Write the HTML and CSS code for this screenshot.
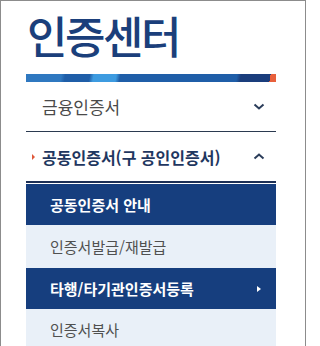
FILE: index.html
```html
<!DOCTYPE html>
<html lang="ko">
<head>
<meta charset="utf-8">
<link rel="stylesheet" href="styles.css">
</head>
<body>
<div class="page">
  <h1 class="title">인증센터</h1>
  <div class="bar"></div>
  <ul class="menu">
    <li class="item">
      <span class="label">금융인증서</span>
      <svg class="chev" width="12" height="7" viewBox="0 0 12 7"><path d="M1.5 1.5 L6 5.5 L10.5 1.5" fill="none" stroke="#2b3d5a" stroke-width="2"/></svg>
    </li>
    <li class="item open">
      <span class="marker"></span>
      <span class="label">공동인증서(구 공인인증서)</span>
      <svg class="chev" width="12" height="7" viewBox="0 0 12 7"><path d="M1.5 5.5 L6 1.5 L10.5 5.5" fill="none" stroke="#2b3d5a" stroke-width="2"/></svg>
    </li>
  </ul>
  <ul class="sub">
    <li class="sub-item on">공동인증서 안내</li>
    <li class="sub-item">인증서발급/재발급</li>
    <li class="sub-item on">타행/타기관인증서등록<span class="tri"></span></li>
    <li class="sub-item">인증서복사</li>
  </ul>
</div>
</body>
</html>
```
FILE: styles.css
```css
html, body {
  margin: 0;
  padding: 0;
  background: #fff;
}
body {
  font-family: "Noto Sans CJK KR", "Noto Sans", sans-serif;
}
.page {
  width: 250px;
  height: 360px;
  border: 1px solid #8c8c8c;
  padding: 0 29px 0 25px;
  overflow: hidden;
}
.title {
  margin: 0;
  height: 73px;
  font-size: 44px;
  line-height: 68px;
  font-weight: 500;
  letter-spacing: -2.5px;
  color: #1b3f7b;
  padding-left: 1px;
}
.bar {
  height: 8px;
  background: linear-gradient(100deg,
    #2f78c0 0, #2f78c0 35px,
    #1f5ea8 39px, #1f5ea8 63px,
    #3d9be0 67px, #3d9be0 89px,
    #1f5ea8 93px, #1f5ea8 208px,
    #1a3d7c 212px, #1a3d7c 241px,
    #e8603c 241px, #e8603c 100%);
}
.menu, .sub {
  list-style: none;
  margin: 0;
  padding: 0;
}
.item {
  position: relative;
  display: flex;
  align-items: center;
  height: 49px;
  padding-left: 16px;
  padding-right: 11px;
  border-bottom: 1px solid #2b3a50;
}
.item .label {
  flex: 1;
  font-size: 17px;
  color: #4a4a4a;
  letter-spacing: 0;
}
.item.open {
  border-bottom: 2px solid #1c2f55;
  height: 49px;
}
.item.open .label {
  font-size: 16px;
  font-weight: 700;
  color: #1f3760;
  letter-spacing: 0;
}
.marker {
  position: absolute;
  left: 6px;
  top: 22px;
  width: 0;
  height: 0;
  border-top: 3px solid transparent;
  border-bottom: 3px solid transparent;
  border-left: 3px solid #e0583a;
}
.chev {
  display: block;
}
.sub {
  margin-top: 1px;
}
.sub-item {
  display: flex;
  align-items: center;
  height: 41px;
  padding-left: 24px;
  padding-right: 15px;
  font-size: 15px;
  letter-spacing: 0;
  background: #e9f0f8;
  color: #505050;
}
.sub-item:nth-child(2) {
  height: 43px;
}
.sub-item.on {
  background: #163e7e;
  color: #fff;
  font-weight: 700;
}
.tri {
  margin-left: auto;
  width: 0;
  height: 0;
  border-top: 3px solid transparent;
  border-bottom: 3px solid transparent;
  border-left: 4px solid #fff;
}
```
